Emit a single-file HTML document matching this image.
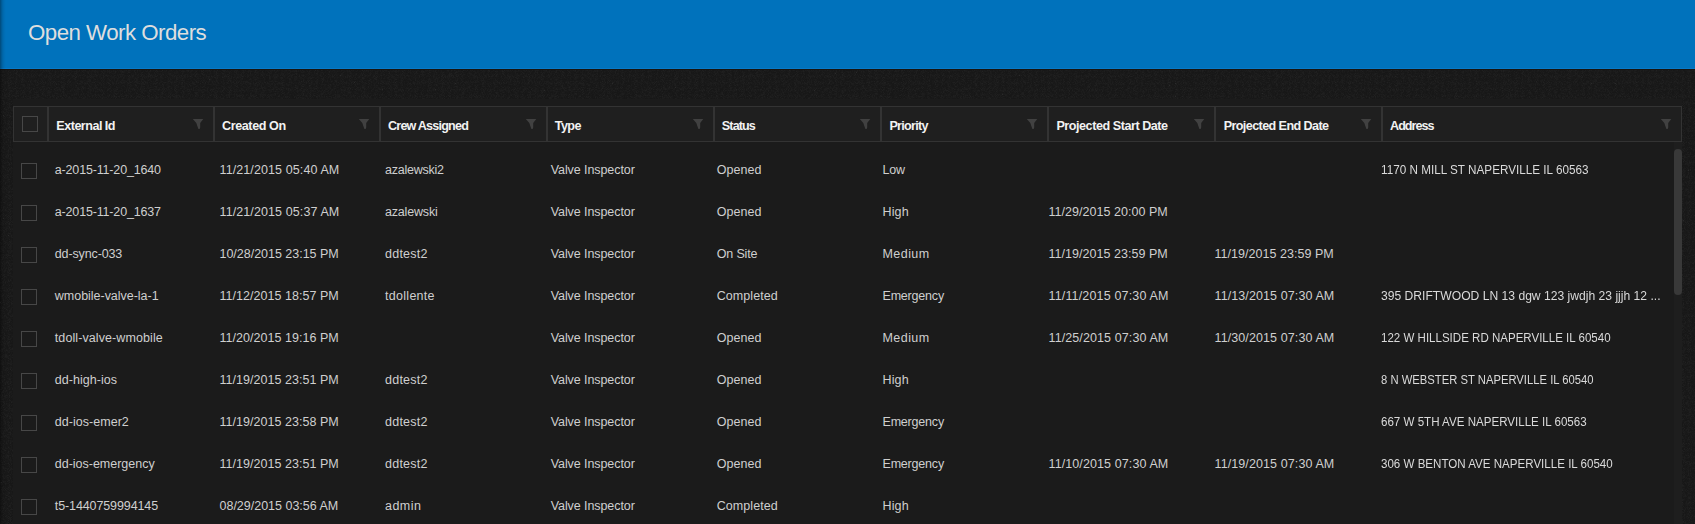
<!DOCTYPE html>
<html><head><meta charset="utf-8"><style>
*{box-sizing:border-box;margin:0;padding:0}
html,body{width:1695px;height:524px;overflow:hidden;background:#1a1a1a;font-family:"Liberation Sans",sans-serif}
#shadowL{position:absolute;left:0;top:0;width:7px;height:524px;background:linear-gradient(to right,rgba(0,0,0,0.36) 0px,rgba(0,0,0,0.26) 1px,rgba(0,0,0,0.16) 2px,rgba(0,0,0,0.09) 3px,rgba(0,0,0,0.05) 4px,rgba(0,0,0,0.02) 5px,rgba(0,0,0,0) 6px)}
#hdr{position:absolute;left:0;top:0;width:1695px;height:68px;background:#0072bc}
#hdrline{position:absolute;left:0;top:68px;width:1695px;height:1px;background:#0779c9}
#hdrsh{position:absolute;left:0;top:69px;width:1695px;height:1px;background:#181410}
#title{position:absolute;left:28px;top:19.5px;font-size:22.3px;line-height:26px;color:#dedede;white-space:nowrap;letter-spacing:-0.5333333333333333px}
.th{position:absolute;top:106px;height:36px;border:1px solid #333333;background:#1f1f1f}
.tht{position:absolute;font-size:12.6px;font-weight:700;color:#f2f2f2;line-height:14px;white-space:nowrap}
.cb{position:absolute;width:16px;height:16px;border:1px solid #474747}
#body{position:absolute;left:13px;top:142px;width:1669px;height:382px;background:#1b1b1b}
.td{position:absolute;font-size:12.5px;line-height:16px;color:#cfcfcf;white-space:nowrap}
#thumb{position:absolute;left:1674px;top:149px;width:8px;height:146px;border-radius:4px;background:#393939}
</style></head><body>
<div id="hdr"></div><div id="hdrline"></div><div id="hdrsh"></div>
<div id="title">Open Work Orders</div>
<svg id="noise" width="1695" height="524" style="position:absolute;left:0;top:0"><filter id="nf" x="0" y="0" width="100%" height="100%" color-interpolation-filters="sRGB"><feTurbulence type="turbulence" baseFrequency="0.85" numOctaves="1" seed="3"/><feColorMatrix values="0.0735 0 0 0 0.0898  0.0735 0 0 0 0.0898  0.0735 0 0 0 0.0898  0 0 0 0 1"/></filter><rect x="0" y="70" width="1695" height="454" fill="#1a1a1a"/><rect x="0" y="70" width="1695" height="454" filter="url(#nf)" opacity="1"/></svg>
<div id="cont" style="position:absolute;left:13px;top:99px;width:1669px;height:425px;background:#1b1b1b"></div>
<div id="body"></div>
<div id="track" style="position:absolute;left:1674px;top:142px;width:8px;height:382px;background:#1e1e1e"></div>

<div class="th" style="left:13px;width:35px">
<div class="cb" style="left:8px;top:9px"></div>
</div>
<div class="th" style="left:48px;width:166px">
<div class="tht" id="h1" style="left:7.35px;top:11.6px;letter-spacing:-0.52px">External Id</div>
<div style="position:absolute;right:9px;top:12px;width:12px;height:11px"><svg width="12" height="11" viewBox="0 0 12 11" style="display:block"><path d="M0.8 0 L11.3 0 L8.2 4 L8.2 8.6 Q8.1 10.1 7.1 10.1 L6.4 10.1 L4.3 4 Z" fill="#414141"/></svg></div>
</div>
<div class="th" style="left:214px;width:166px">
<div class="tht" id="h2" style="left:7.07px;top:11.6px;letter-spacing:-0.425px">Created On</div>
<div style="position:absolute;right:9px;top:12px;width:12px;height:11px"><svg width="12" height="11" viewBox="0 0 12 11" style="display:block"><path d="M0.8 0 L11.3 0 L8.2 4 L8.2 8.6 Q8.1 10.1 7.1 10.1 L6.4 10.1 L4.3 4 Z" fill="#414141"/></svg></div>
</div>
<div class="th" style="left:380px;width:167px">
<div class="tht" id="h3" style="left:7.0px;top:11.6px;letter-spacing:-0.8px">Crew Assigned</div>
<div style="position:absolute;right:9px;top:12px;width:12px;height:11px"><svg width="12" height="11" viewBox="0 0 12 11" style="display:block"><path d="M0.8 0 L11.3 0 L8.2 4 L8.2 8.6 Q8.1 10.1 7.1 10.1 L6.4 10.1 L4.3 4 Z" fill="#414141"/></svg></div>
</div>
<div class="th" style="left:547px;width:167px">
<div class="tht" id="h4" style="left:6.86px;top:11.6px;letter-spacing:-0.634px">Type</div>
<div style="position:absolute;right:9px;top:12px;width:12px;height:11px"><svg width="12" height="11" viewBox="0 0 12 11" style="display:block"><path d="M0.8 0 L11.3 0 L8.2 4 L8.2 8.6 Q8.1 10.1 7.1 10.1 L6.4 10.1 L4.3 4 Z" fill="#414141"/></svg></div>
</div>
<div class="th" style="left:714px;width:167px">
<div class="tht" id="h5" style="left:6.86px;top:11.6px;letter-spacing:-0.9px">Status</div>
<div style="position:absolute;right:9px;top:12px;width:12px;height:11px"><svg width="12" height="11" viewBox="0 0 12 11" style="display:block"><path d="M0.8 0 L11.3 0 L8.2 4 L8.2 8.6 Q8.1 10.1 7.1 10.1 L6.4 10.1 L4.3 4 Z" fill="#414141"/></svg></div>
</div>
<div class="th" style="left:881px;width:167px">
<div class="tht" id="h6" style="left:7.42px;top:11.6px;letter-spacing:-0.703px">Priority</div>
<div style="position:absolute;right:9px;top:12px;width:12px;height:11px"><svg width="12" height="11" viewBox="0 0 12 11" style="display:block"><path d="M0.8 0 L11.3 0 L8.2 4 L8.2 8.6 Q8.1 10.1 7.1 10.1 L6.4 10.1 L4.3 4 Z" fill="#414141"/></svg></div>
</div>
<div class="th" style="left:1048px;width:167px">
<div class="tht" id="h7" style="left:7.42px;top:11.6px;letter-spacing:-0.458px">Projected Start Date</div>
<div style="position:absolute;right:9px;top:12px;width:12px;height:11px"><svg width="12" height="11" viewBox="0 0 12 11" style="display:block"><path d="M0.8 0 L11.3 0 L8.2 4 L8.2 8.6 Q8.1 10.1 7.1 10.1 L6.4 10.1 L4.3 4 Z" fill="#414141"/></svg></div>
</div>
<div class="th" style="left:1215px;width:167px">
<div class="tht" id="h8" style="left:7.63px;top:11.6px;letter-spacing:-0.591px">Projected End Date</div>
<div style="position:absolute;right:9px;top:12px;width:12px;height:11px"><svg width="12" height="11" viewBox="0 0 12 11" style="display:block"><path d="M0.8 0 L11.3 0 L8.2 4 L8.2 8.6 Q8.1 10.1 7.1 10.1 L6.4 10.1 L4.3 4 Z" fill="#414141"/></svg></div>
</div>
<div class="th" style="left:1382px;width:300px">
<div class="tht" id="h9" style="left:7.0px;top:11.6px;letter-spacing:-0.967px">Address</div>
<div style="position:absolute;right:9px;top:12px;width:12px;height:11px"><svg width="12" height="11" viewBox="0 0 12 11" style="display:block"><path d="M0.8 0 L11.3 0 L8.2 4 L8.2 8.6 Q8.1 10.1 7.1 10.1 L6.4 10.1 L4.3 4 Z" fill="#414141"/></svg></div>
</div>
<div class="cb" style="left:21px;top:163px"></div>
<div class="td" id="r0c0" style="left:54.8px;top:162px;letter-spacing:-0.167px">a-2015-11-20_1640</div>
<div class="td" id="r0c1" style="left:219.5px;top:162px;letter-spacing:0.102px">11/21/2015 05:40 AM</div>
<div class="td" id="r0c2" style="left:385px;top:162px;letter-spacing:-0.248px">azalewski2</div>
<div class="td" id="r0c3" style="left:550.7px;top:162px;letter-spacing:-0.078px">Valve Inspector</div>
<div class="td" id="r0c4" style="left:716.7px;top:162px;letter-spacing:0.053px">Opened</div>
<div class="td" id="r0c5" style="left:882.5px;top:162px;letter-spacing:-0.146px">Low</div>
<div class="td" id="r0c8" style="left:1380.5px;top:162px;transform:scaleX(0.9372);transform-origin:0 0;color:#dadada">1170 N MILL ST NAPERVILLE IL 60563</div>
<div class="cb" style="left:21px;top:205px"></div>
<div class="td" id="r1c0" style="left:54.8px;top:204px;letter-spacing:-0.167px">a-2015-11-20_1637</div>
<div class="td" id="r1c1" style="left:219.5px;top:204px;letter-spacing:0.102px">11/21/2015 05:37 AM</div>
<div class="td" id="r1c2" style="left:385px;top:204px;letter-spacing:-0.177px">azalewski</div>
<div class="td" id="r1c3" style="left:550.7px;top:204px;letter-spacing:-0.078px">Valve Inspector</div>
<div class="td" id="r1c4" style="left:716.7px;top:204px;letter-spacing:0.053px">Opened</div>
<div class="td" id="r1c5" style="left:882.5px;top:204px;letter-spacing:0.158px">High</div>
<div class="td" id="r1c6" style="left:1048.5px;top:204px;letter-spacing:0.037px">11/29/2015 20:00 PM</div>
<div class="cb" style="left:21px;top:247px"></div>
<div class="td" id="r2c0" style="left:54.8px;top:246px;letter-spacing:-0.133px">dd-sync-033</div>
<div class="td" id="r2c1" style="left:219.5px;top:246px;letter-spacing:-0.018px">10/28/2015 23:15 PM</div>
<div class="td" id="r2c2" style="left:385px;top:246px;letter-spacing:0.24px">ddtest2</div>
<div class="td" id="r2c3" style="left:550.7px;top:246px;letter-spacing:-0.078px">Valve Inspector</div>
<div class="td" id="r2c4" style="left:716.7px;top:246px;letter-spacing:-0.143px">On Site</div>
<div class="td" id="r2c5" style="left:882.5px;top:246px;letter-spacing:0.442px">Medium</div>
<div class="td" id="r2c6" style="left:1048.5px;top:246px;letter-spacing:0.037px">11/19/2015 23:59 PM</div>
<div class="td" id="r2c7" style="left:1214.5px;top:246px;letter-spacing:0.037px">11/19/2015 23:59 PM</div>
<div class="cb" style="left:21px;top:289px"></div>
<div class="td" id="r3c0" style="left:54.8px;top:288px;letter-spacing:-0.021px">wmobile-valve-la-1</div>
<div class="td" id="r3c1" style="left:219.5px;top:288px;letter-spacing:0.037px">11/12/2015 18:57 PM</div>
<div class="td" id="r3c2" style="left:385px;top:288px;letter-spacing:0.289px">tdollente</div>
<div class="td" id="r3c3" style="left:550.7px;top:288px;letter-spacing:-0.078px">Valve Inspector</div>
<div class="td" id="r3c4" style="left:716.7px;top:288px;letter-spacing:0.077px">Completed</div>
<div class="td" id="r3c5" style="left:882.5px;top:288px;letter-spacing:-0.193px">Emergency</div>
<div class="td" id="r3c6" style="left:1048.5px;top:288px;letter-spacing:0.158px">11/11/2015 07:30 AM</div>
<div class="td" id="r3c7" style="left:1214.5px;top:288px;letter-spacing:0.102px">11/13/2015 07:30 AM</div>
<div class="td" id="r3c8" style="left:1380.5px;top:288px;transform:scaleX(0.9696);transform-origin:0 0;color:#dadada">395 DRIFTWOOD LN 13 dgw 123 jwdjh 23 jjjh 12 ...</div>
<div class="cb" style="left:21px;top:331px"></div>
<div class="td" id="r4c0" style="left:54.8px;top:330px;letter-spacing:0.093px">tdoll-valve-wmobile</div>
<div class="td" id="r4c1" style="left:219.5px;top:330px;letter-spacing:0.037px">11/20/2015 19:16 PM</div>
<div class="td" id="r4c3" style="left:550.7px;top:330px;letter-spacing:-0.078px">Valve Inspector</div>
<div class="td" id="r4c4" style="left:716.7px;top:330px;letter-spacing:0.053px">Opened</div>
<div class="td" id="r4c5" style="left:882.5px;top:330px;letter-spacing:0.442px">Medium</div>
<div class="td" id="r4c6" style="left:1048.5px;top:330px;letter-spacing:0.102px">11/25/2015 07:30 AM</div>
<div class="td" id="r4c7" style="left:1214.5px;top:330px;letter-spacing:0.102px">11/30/2015 07:30 AM</div>
<div class="td" id="r4c8" style="left:1380.5px;top:330px;transform:scaleX(0.9229);transform-origin:0 0;color:#dadada">122 W HILLSIDE RD NAPERVILLE IL 60540</div>
<div class="cb" style="left:21px;top:373px"></div>
<div class="td" id="r5c0" style="left:54.8px;top:372px;letter-spacing:0.038px">dd-high-ios</div>
<div class="td" id="r5c1" style="left:219.5px;top:372px;letter-spacing:0.037px">11/19/2015 23:51 PM</div>
<div class="td" id="r5c2" style="left:385px;top:372px;letter-spacing:0.24px">ddtest2</div>
<div class="td" id="r5c3" style="left:550.7px;top:372px;letter-spacing:-0.078px">Valve Inspector</div>
<div class="td" id="r5c4" style="left:716.7px;top:372px;letter-spacing:0.053px">Opened</div>
<div class="td" id="r5c5" style="left:882.5px;top:372px;letter-spacing:0.158px">High</div>
<div class="td" id="r5c8" style="left:1380.5px;top:372px;transform:scaleX(0.9008);transform-origin:0 0;color:#dadada">8 N WEBSTER ST NAPERVILLE IL 60540</div>
<div class="cb" style="left:21px;top:415px"></div>
<div class="td" id="r6c0" style="left:54.8px;top:414px;letter-spacing:0.031px">dd-ios-emer2</div>
<div class="td" id="r6c1" style="left:219.5px;top:414px;letter-spacing:0.037px">11/19/2015 23:58 PM</div>
<div class="td" id="r6c2" style="left:385px;top:414px;letter-spacing:0.24px">ddtest2</div>
<div class="td" id="r6c3" style="left:550.7px;top:414px;letter-spacing:-0.078px">Valve Inspector</div>
<div class="td" id="r6c4" style="left:716.7px;top:414px;letter-spacing:0.053px">Opened</div>
<div class="td" id="r6c5" style="left:882.5px;top:414px;letter-spacing:-0.193px">Emergency</div>
<div class="td" id="r6c8" style="left:1380.5px;top:414px;transform:scaleX(0.926);transform-origin:0 0;color:#dadada">667 W 5TH AVE NAPERVILLE IL 60563</div>
<div class="cb" style="left:21px;top:457px"></div>
<div class="td" id="r7c0" style="left:54.8px;top:456px;letter-spacing:-0.014px">dd-ios-emergency</div>
<div class="td" id="r7c1" style="left:219.5px;top:456px;letter-spacing:0.037px">11/19/2015 23:51 PM</div>
<div class="td" id="r7c2" style="left:385px;top:456px;letter-spacing:0.24px">ddtest2</div>
<div class="td" id="r7c3" style="left:550.7px;top:456px;letter-spacing:-0.078px">Valve Inspector</div>
<div class="td" id="r7c4" style="left:716.7px;top:456px;letter-spacing:0.053px">Opened</div>
<div class="td" id="r7c5" style="left:882.5px;top:456px;letter-spacing:-0.193px">Emergency</div>
<div class="td" id="r7c6" style="left:1048.5px;top:456px;letter-spacing:0.102px">11/10/2015 07:30 AM</div>
<div class="td" id="r7c7" style="left:1214.5px;top:456px;letter-spacing:0.102px">11/19/2015 07:30 AM</div>
<div class="td" id="r7c8" style="left:1380.5px;top:456px;transform:scaleX(0.9256);transform-origin:0 0;color:#dadada">306 W BENTON AVE NAPERVILLE IL 60540</div>
<div class="cb" style="left:21px;top:499px"></div>
<div class="td" id="r8c0" style="left:54.8px;top:498px;letter-spacing:-0.108px">t5-1440759994145</div>
<div class="td" id="r8c1" style="left:219.5px;top:498px;letter-spacing:-0.009px">08/29/2015 03:56 AM</div>
<div class="td" id="r8c2" style="left:385px;top:498px;letter-spacing:0.459px">admin</div>
<div class="td" id="r8c3" style="left:550.7px;top:498px;letter-spacing:-0.078px">Valve Inspector</div>
<div class="td" id="r8c4" style="left:716.7px;top:498px;letter-spacing:0.077px">Completed</div>
<div class="td" id="r8c5" style="left:882.5px;top:498px;letter-spacing:0.158px">High</div>
<div id="thumb"></div><div id="shadowL"></div>
</body></html>
